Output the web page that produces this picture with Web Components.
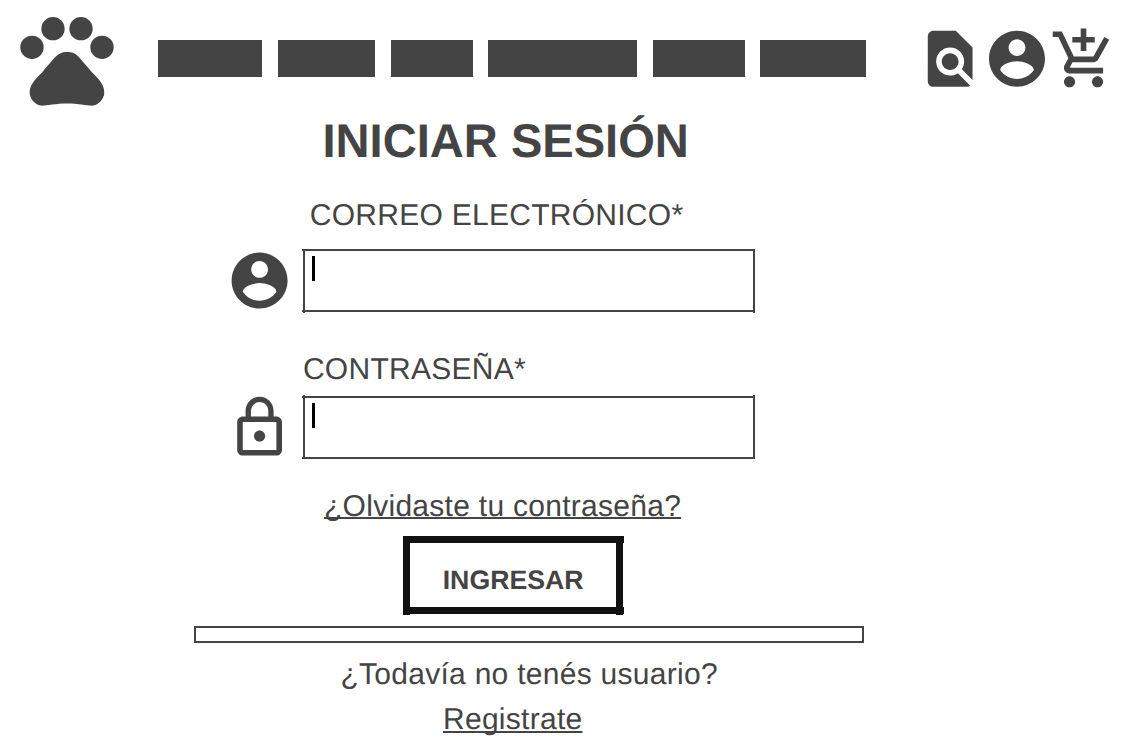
<!DOCTYPE html>
<html lang="es">
<head>
<meta charset="utf-8">
<title>Iniciar sesión</title>
<style>
body { margin: 0; background: #fff; color: #444; font-family: "Liberation Sans", Arial, sans-serif; text-rendering: geometricPrecision; }
</style>
</head>
<body>
<login-page></login-page>
<script>
const ICONS = {
  pets: '<circle cx="4.5" cy="9.5" r="2.5"/><circle cx="9" cy="5.5" r="2.5"/><circle cx="15" cy="5.5" r="2.5"/><circle cx="19.5" cy="9.5" r="2.5"/><path d="M17.34 14.86c-.87-1.02-1.6-1.89-2.48-2.91-.46-.54-1.05-1.08-1.75-1.32-.11-.04-.22-.07-.33-.09-.25-.04-.52-.04-.78-.04s-.53 0-.79.05c-.11.02-.22.05-.33.09-.7.24-1.28.78-1.75 1.32-.87 1.02-1.6 1.89-2.48 2.91-1.31 1.31-2.92 2.76-2.62 4.79.29 1.02 1.02 2.03 2.33 2.32.73.15 3.06-.44 5.54-.44h.18c2.48 0 4.81.58 5.54.44 1.31-.29 2.04-1.31 2.33-2.32.31-2.04-1.3-3.49-2.61-4.8z"/>',
  find: '<path d="M20 19.59V8l-6-6H6c-1.1 0-1.99.9-1.99 2L4 20c0 1.1.89 2 1.99 2H18c.45 0 .85-.15 1.19-.4l-4.43-4.43c-.8.52-1.74.83-2.76.83-2.76 0-5-2.24-5-5s2.24-5 5-5 5 2.24 5 5c0 1.02-.31 1.96-.83 2.75L20 19.59zM9 13c0 1.66 1.34 3 3 3s3-1.34 3-3-1.34-3-3-3-3 1.34-3 3z"/>',
  account: '<path d="M12 2C6.48 2 2 6.48 2 12s4.48 10 10 10 10-4.48 10-10S17.52 2 12 2zm0 3c1.66 0 3 1.34 3 3s-1.34 3-3 3-3-1.34-3-3 1.34-3 3-3zm0 14.2c-2.5 0-4.71-1.28-6-3.22.03-1.99 4-3.08 6-3.08 1.99 0 5.97 1.09 6 3.08-1.29 1.94-3.5 3.22-6 3.22z"/>',
  cart: '<path d="M11 9h2V6h3V4h-3V1h-2v3H8v2h3v3zm-4 9c-1.1 0-1.99.9-1.99 2S5.9 22 7 22s2-.9 2-2-.9-2-2-2zm10 0c-1.1 0-1.99.9-1.99 2s.89 2 1.99 2 2-.9 2-2-.9-2-2-2zm-9.83-3.25l.03-.12.9-1.63h7.45c.75 0 1.41-.41 1.75-1.03l3.86-7.01L19.42 4h-.01l-1.1 2-2.76 5H8.53l-.13-.27L6.16 6l-.95-2-.94-2H1v2h2l3.6 7.59-1.35 2.45c-.16.28-.25.61-.25.96 0 1.1.9 2 2 2h12v-2H7.42c-.13 0-.25-.11-.25-.25z"/>',
  lock: '<path d="M12 17c1.1 0 2-.9 2-2s-.9-2-2-2-2 .9-2 2 .9 2 2 2zm6-9h-1V6c0-2.76-2.24-5-5-5S7 3.24 7 6v2H6c-1.1 0-2 .9-2 2v10c0 1.1.9 2 2 2h12c1.1 0 2-.9 2-2V10c0-1.1-.9-2-2-2zM8.9 6c0-1.71 1.39-3.1 3.1-3.1s3.1 1.39 3.1 3.1v2H8.9V6zM18 20H6V10h12v10z"/>'
};
function define(name, html) {
  customElements.define(name, class extends HTMLElement {
    constructor() {
      super();
      this.attachShadow({ mode: 'open' }).innerHTML = typeof html === 'function' ? html(this) : html;
    }
  });
}

define('ui-icon', el => `<style>
:host { display: block; width: 67.2px; height: 67.2px; flex: none; }
svg { display: block; width: 100%; height: 100%; fill: currentColor; overflow: visible; }
</style><svg viewBox="0 0 24 24"><g transform="translate(${el.getAttribute('nudge') || '0 0'})">${ICONS[el.getAttribute('name')]}</g></svg>`);

define('nav-block', el => `<style>
:host { display: block; height: 37px; background: #444; width: ${el.getAttribute('width')}px; margin-right: ${el.getAttribute('gap') || 0}px; }
</style>`);

define('site-header', `<style>
:host { display: flex; height: 115px; align-items: flex-start; }
.logo { width: 112px; height: 112px; margin: 2.6px 0 0 10.9px; }
nav { display: flex; margin: 40px 0 0 35.1px; }
.actions { display: flex; margin: 25px 0 0 50px; }
.cart { margin-left: -1.2px; }
</style>
<ui-icon class="logo" name="pets"></ui-icon>
<nav>
<nav-block width="104" gap="16"></nav-block><nav-block width="97" gap="16"></nav-block><nav-block width="82" gap="15"></nav-block><nav-block width="149" gap="16"></nav-block><nav-block width="92" gap="15"></nav-block><nav-block width="106"></nav-block>
</nav>
<div class="actions">
<ui-icon name="find" nudge=".2 .07"></ui-icon><ui-icon name="account" nudge=".15 .07"></ui-icon><ui-icon class="cart" name="cart" nudge=".33 .28"></ui-icon>
</div>`);

/* Wireframe text box: its four strokes overshoot the corners slightly. */
define('text-box', el => {
  const raised = el.hasAttribute('raised');
  return `<style>
:host { display: block; width: 453px; height: 64px; }
svg { display: block; }
</style><svg width="453" height="64" fill="#444" shape-rendering="crispEdges">
${raised
  ? '<path d="M0 1h453v2H0zM0 62h453v2H0zM1 0h2v64H1zM451 0h2v64h-2z"/><path fill="#000" d="M10 8h3v25h-3z"/>'
  : '<path d="M0 0h453v2H0zM0 61h453v2H0zM1 0h2v64H1zM451 0h2v64h-2z"/><path fill="#000" d="M10 7h3v25h-3z"/>'}
</svg>`;
});

define('form-row', `<style>
:host { display: flex; align-items: flex-start; margin-left: 226px; }
::slotted(text-box) { margin-left: 8.8px; }
</style><slot></slot>`);

define('text-line', `<style>
:host { display: block; width: max-content; white-space: nowrap; font-size: 30px; height: 34px; line-height: 36px; letter-spacing: .28px; }
</style><slot></slot>`);

define('outline-button', `<style>
:host { display: grid; width: 221px; height: 79px; }
svg, span { grid-area: 1 / 1; }
span { font-weight: 700; font-size: 26.7px; line-height: 30px; padding: 29px 0 0 39.7px; color: #444; }
</style><svg width="221" height="79" fill="#111" shape-rendering="crispEdges"><path d="M0 0h221v7H0zM0 71h221v7H0zM0 0h7v79H0zM213 0h7v79h-7z"/></svg><span><slot></slot></span>`);

define('login-page', `<style>
:host { display: flex; flex-direction: column; align-items: flex-start; width: 1127px; height: 745px; overflow: hidden; }
site-header { width: 100%; }
h1 { margin: 0 0 0 322.5px; font-size: 47.1px; line-height: 52px; height: 54px; white-space: nowrap; }
.mail { margin: 30px 0 0 309.7px; line-height: 34px; }
.mailrow { margin-top: 13.9px; height: 67.2px; }
.mailrow text-box { margin-top: 2.1px; }
.pass { margin: 38px 0 0 302.9px; }
.passrow { margin-top: 8px; height: 67.2px; }
.passrow text-box { margin-top: .9px; }
.u { text-decoration: underline; text-decoration-thickness: 1.5px; text-underline-offset: 1px; text-decoration-skip-ink: none; }
.forgot { margin: 28px 0 0 324px; }
outline-button { margin: 13px 0 0 403px; }
.rule { box-sizing: border-box; width: 670px; height: 17px; border: 2px solid #444; margin: 11px 0 0 194px; }
.ask { margin: 15px 0 0 340.4px; line-height: 34px; }
.reg { margin: 11px 0 0 443px; line-height: 34px; text-underline-offset: 2px; }
</style>
<site-header></site-header>
<h1>INICIAR SESIÓN</h1>
<text-line class="mail">CORREO ELECTRÓNICO*</text-line>
<form-row class="mailrow"><ui-icon name="account"></ui-icon><text-box></text-box></form-row>
<text-line class="pass">CONTRASEÑA*</text-line>
<form-row class="passrow"><ui-icon name="lock"></ui-icon><text-box raised></text-box></form-row>
<text-line class="forgot u">¿Olvidaste tu contraseña?</text-line>
<outline-button>INGRESAR</outline-button>
<div class="rule"></div>
<text-line class="ask">¿Todavía no tenés usuario?</text-line>
<text-line class="reg u">Registrate</text-line>`);
</script>
</body>
</html>
